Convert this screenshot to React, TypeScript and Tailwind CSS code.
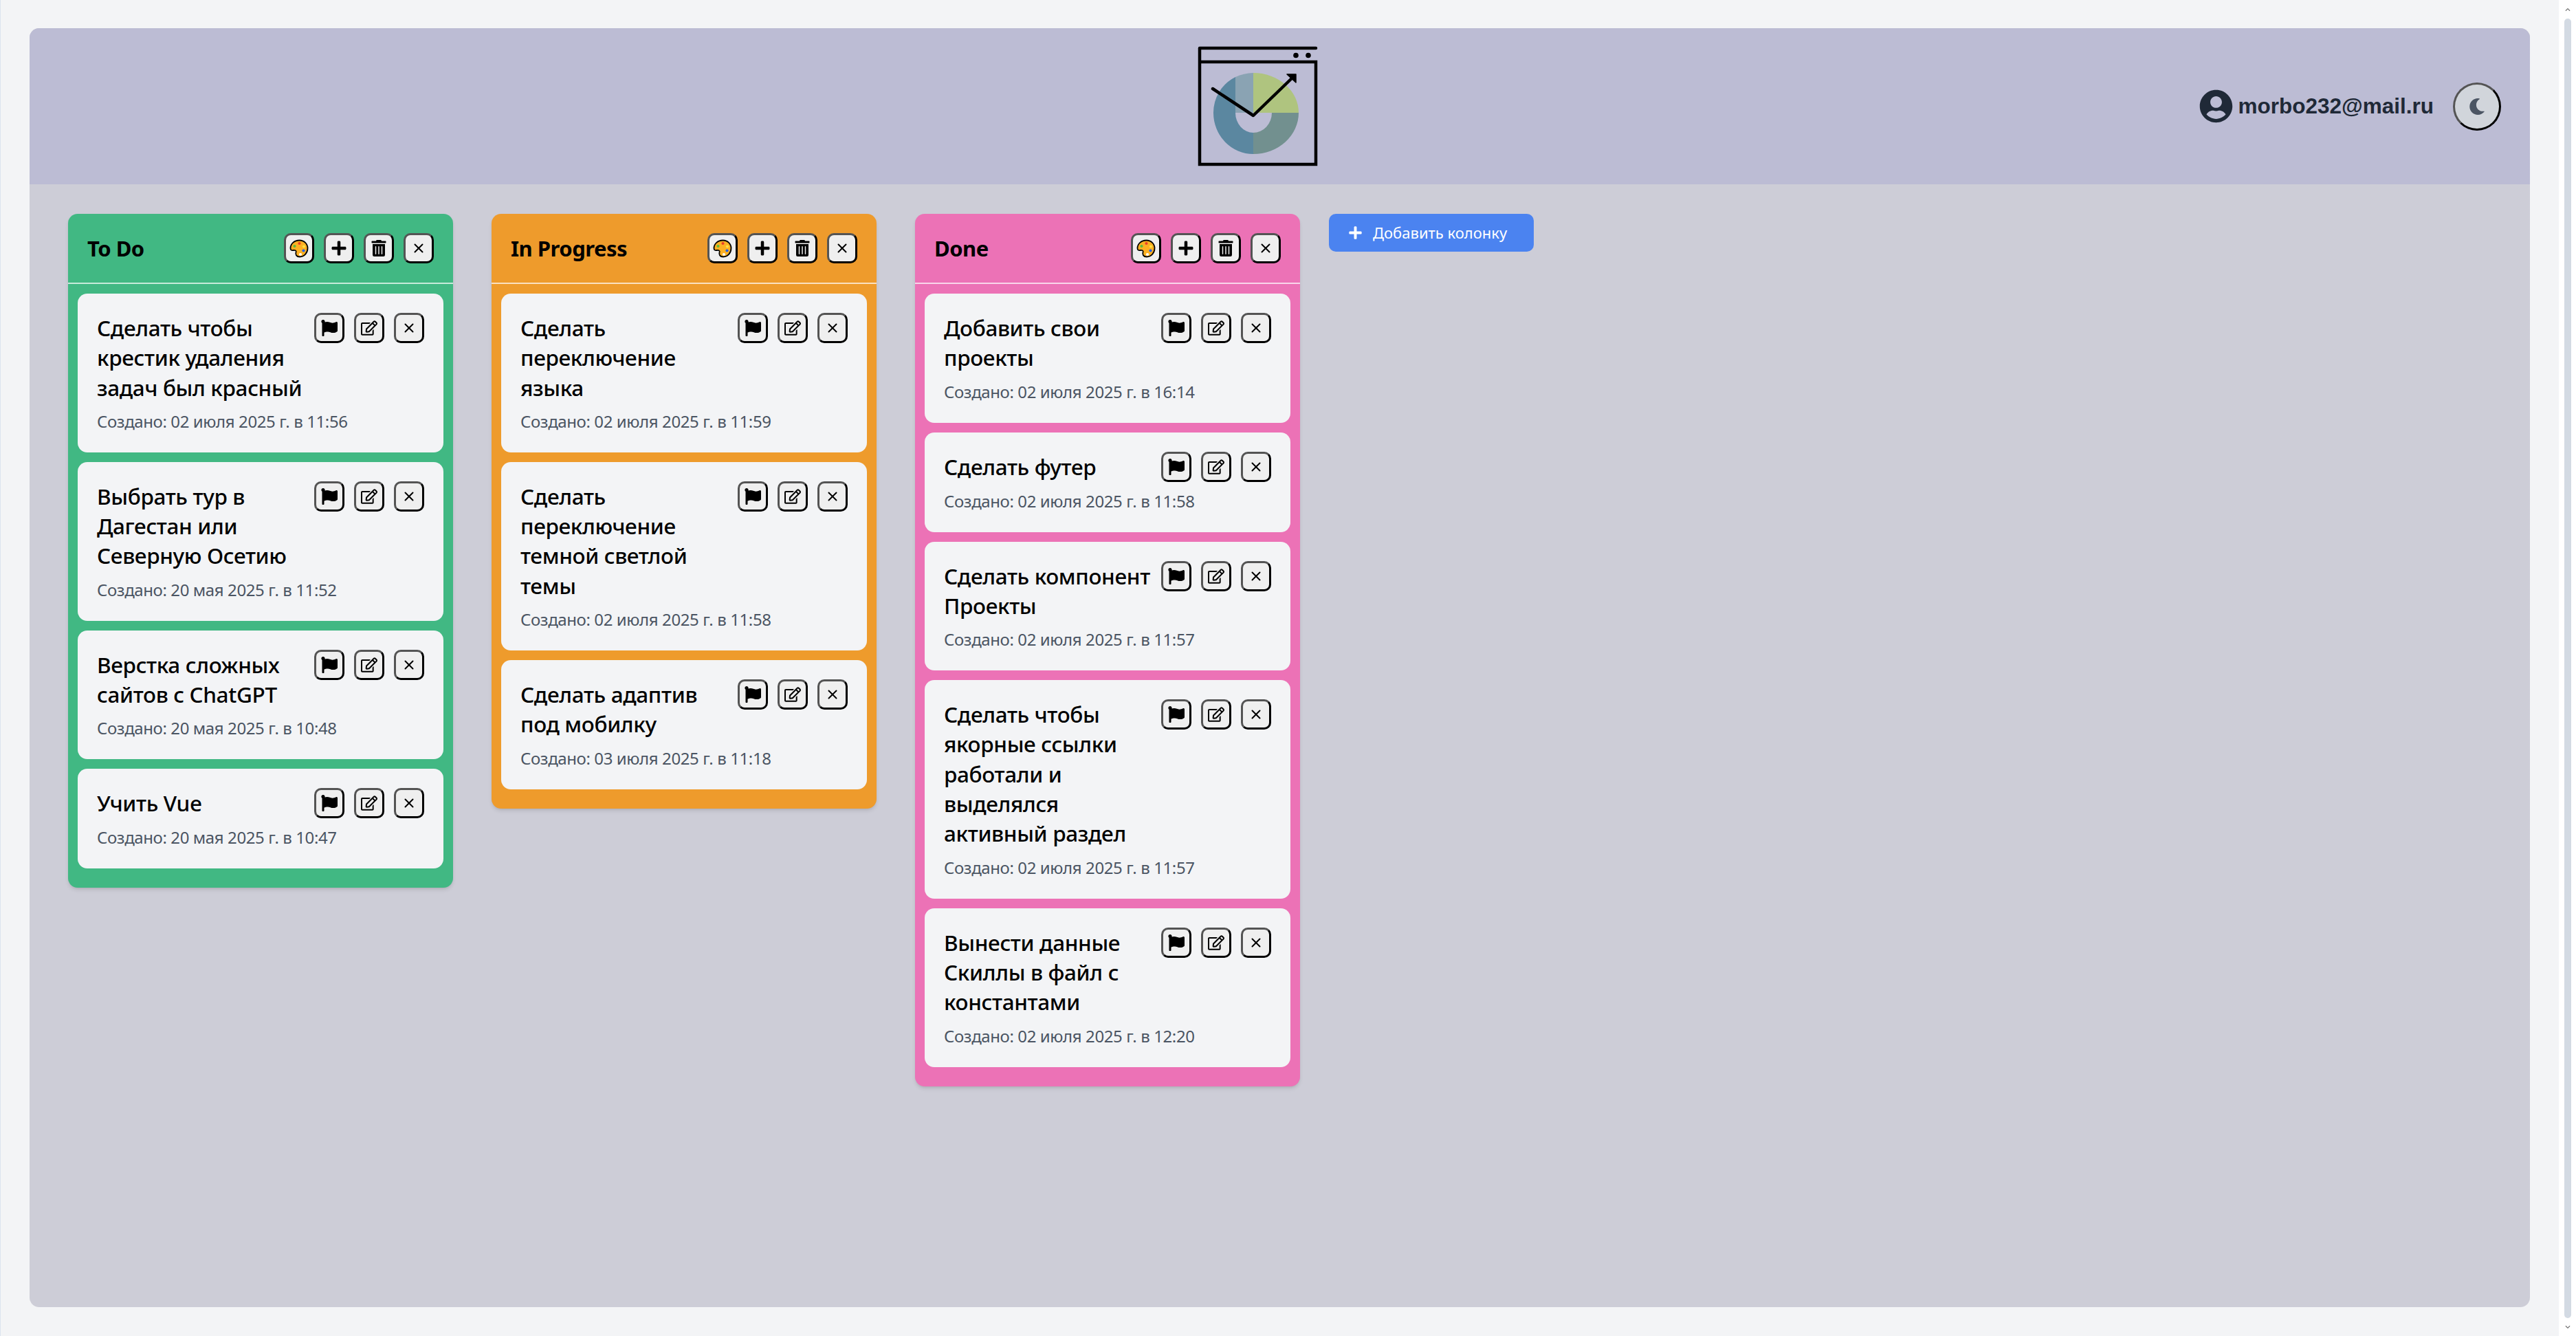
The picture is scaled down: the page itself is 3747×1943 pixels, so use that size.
import { FaChevronDown, FaChevronUp, FaFlag, FaMoon, FaPlus, FaRegEdit, FaTrashAlt, FaUserCircle } from "react-icons/fa";
import { X } from "lucide-react";
import type { ReactNode } from "react";

const columns = [
  {
    title: "To Do",
    color: "bg-[#41b883]",
    tasks: [
      { text: "Сделать чтобы\nкрестик удаления\nзадач был красный", date: "02 июля 2025 г. в 11:56" },
      { text: "Выбрать тур в\nДагестан или\nСеверную Осетию", date: "20 мая 2025 г. в 11:52" },
      { text: "Верстка сложных\nсайтов с ChatGPT", date: "20 мая 2025 г. в 10:48" },
      { text: "Учить Vue", date: "20 мая 2025 г. в 10:47" },
    ],
  },
  {
    title: "In Progress",
    color: "bg-[#ee9b2c]",
    tasks: [
      { text: "Сделать\nпереключение\nязыка", date: "02 июля 2025 г. в 11:59" },
      { text: "Сделать\nпереключение\nтемной светлой\nтемы", date: "02 июля 2025 г. в 11:58" },
      { text: "Сделать адаптив\nпод мобилку", date: "03 июля 2025 г. в 11:18" },
    ],
  },
  {
    title: "Done",
    color: "bg-[#ec72b6]",
    tasks: [
      { text: "Добавить свои\nпроекты", date: "02 июля 2025 г. в 16:14" },
      { text: "Сделать футер", date: "02 июля 2025 г. в 11:58" },
      { text: "Сделать компонент\nПроекты", date: "02 июля 2025 г. в 11:57" },
      { text: "Сделать чтобы\nякорные ссылки\nработали и\nвыделялся\nактивный раздел", date: "02 июля 2025 г. в 11:57" },
      { text: "Вынести данные\nСкиллы в файл с\nконстантами", date: "02 июля 2025 г. в 12:20" },
    ],
  },
];

function Logo() {
  return (
    <svg width="184" height="180" viewBox="0 0 184 180" fill="none" className="mr-[22px] shrink-0">
      <path d="M85 99 V41 A62 58 0 0 0 59 47 V99 Z" fill="#8aa3b3" />
      <path d="M85 99 V41 A66 58 0 0 1 151 99 Z" fill="#afc47f" />
      <path d="M151 99 A66 60 0 0 1 85 159 V128 A27 29 0 0 0 112 99 Z" fill="#72908f" />
      <path d="M85 159 A58 60 0 0 1 27 99 A58 58 0 0 1 59 47 V99 A26 29 0 0 0 85 128 Z" fill="#5b87a0" />
      <path d="M7 5 H176" stroke="#000" strokeWidth="4.5" strokeLinecap="round" />
      <path d="M7 5 V174 H176 V25 H7" stroke="#000" strokeWidth="4.5" />
      <circle cx="147" cy="15.5" r="3.8" fill="#000" />
      <circle cx="165" cy="15.5" r="3.8" fill="#000" />
      <path d="M26 64 L85 103 L144 46" stroke="#000" strokeWidth="4.5" strokeLinecap="round" strokeLinejoin="round" />
      <path d="M134 43 H147 V55 Z" fill="#000" stroke="#000" strokeWidth="1.5" strokeLinejoin="round" />
    </svg>
  );
}

function PaletteIcon() {
  return (
    <svg width="28" height="27" viewBox="0 0 28 27">
      <path
        d="M14.5 1.5 C7 1.5 1.5 6.5 1.5 13 C1.5 15.5 3 16.5 5.5 16 C8.5 15.5 10.5 16.5 9.5 19 C8.5 22 10 25.5 15 25.5 C22 25.5 26.5 19.5 26.5 13 C26.5 6.5 21.5 1.5 14.5 1.5 Z"
        fill="#fdb022"
        stroke="#000"
        strokeWidth="1.8"
      />
      <circle cx="14.5" cy="6" r="2.1" fill="#e8402a" />
      <circle cx="7.5" cy="10" r="2.1" fill="#5dbb3f" />
      <circle cx="21" cy="10.5" r="2.1" fill="#fbe043" />
      <circle cx="20.5" cy="16.5" r="2.1" fill="#2563eb" />
      <circle cx="16" cy="22" r="2.1" fill="#ffffff" />
    </svg>
  );
}

function IconButton({ children }: { children: ReactNode }) {
  return (
    <button className="flex h-[44px] w-[44px] shrink-0 items-center justify-center rounded-[10px] border-[3.5px] border-black bg-[#efefef] text-black [border-style:outset]">
      {children}
    </button>
  );
}

function TaskCard({ text, date }: { text: string; date: string }) {
  return (
    <div className="rounded-[14px] bg-[#f3f4f6] p-[28px]">
      <div className="flex items-start justify-between">
        <h3 className="whitespace-pre-line text-[31.5px] leading-[43.3px] font-medium tracking-[-0.35px] text-black">{text}</h3>
        <div className="flex shrink-0 gap-[14px]">
          <IconButton>
            <FaFlag size={24} />
          </IconButton>
          <IconButton>
            <FaRegEdit size={24} />
          </IconButton>
          <IconButton>
            <X size={22} strokeWidth={2.2} />
          </IconButton>
        </div>
      </div>
      <p className="mt-[10px] text-[24px] leading-[35px] tracking-[-0.4px] text-[#4b5563]">Создано: {date}</p>
    </div>
  );
}

function Column({ title, color, tasks }: (typeof columns)[number]) {
  return (
    <section className={`w-[560px] shrink-0 rounded-[14px] pb-[28px] shadow-md ${color}`}>
      <header className="flex h-[102px] items-center justify-between border-b-2 border-white/70 px-[28px]">
        <h2 className="text-[31px] font-bold tracking-[-0.5px] text-black">{title}</h2>
        <div className="flex gap-[14px]">
          <IconButton>
            <PaletteIcon />
          </IconButton>
          <IconButton>
            <FaPlus size={24} />
          </IconButton>
          <IconButton>
            <FaTrashAlt size={24} />
          </IconButton>
          <IconButton>
            <X size={22} strokeWidth={2.2} />
          </IconButton>
        </div>
      </header>
      <div className="mt-[14px] flex flex-col gap-[14px] px-[14px]">
        {tasks.map((task) => (
          <TaskCard key={task.text} text={task.text} date={task.date} />
        ))}
      </div>
    </section>
  );
}

export default function App() {
  return (
    <div className="flex h-[1943px] overflow-hidden bg-white font-['Noto_Sans',sans-serif]">
      <div className="flex flex-1 flex-col border-l border-[#dbe4ee] bg-[#f3f4f6] px-[42px] pt-[41px] pb-[42px]">
        <div className="flex flex-1 flex-col overflow-hidden rounded-[14px] bg-[#cdcdd7]">
          <div className="flex h-[227px] shrink-0 items-center bg-[#bcbcd4]">
            <div className="flex-1" />
            <Logo />
            <div className="flex flex-1 items-center justify-end pr-[42px]">
              <FaUserCircle size={49} className="text-[#1f2937]" />
              <span className="ml-[7px] font-['Liberation_Sans',sans-serif] text-[31.5px] font-bold text-[#1f2937]">morbo232@mail.ru</span>
              <button className="ml-[28px] flex h-[70px] w-[70px] items-center justify-center rounded-full border-[3.5px] border-black bg-[#d1d5db] text-[#4b5563] [border-style:outset]">
                <FaMoon size={24} />
              </button>
            </div>
          </div>
          <div className="flex flex-1 items-start gap-[56px] pt-[43px] pl-[56px]">
            {columns.map((column) => (
              <Column key={column.title} {...column} />
            ))}
            <button className="-ml-[14px] flex h-[55px] items-center gap-[15px] rounded-[10px] bg-[#4b83f0] pr-[39px] pl-[28px] text-[22px] text-white">
              <FaPlus size={21} />
              Добавить колонку
            </button>
          </div>
        </div>
      </div>
      <div className="flex w-[25px] shrink-0 flex-col items-center bg-white text-[#7a7a7a]">
        <div className="flex h-[27px] items-center">
          <FaChevronUp size={8} />
        </div>
        <div className="w-[10px] flex-1 rounded-full bg-[#d3dae3]" />
        <div className="flex h-[26px] items-center">
          <FaChevronDown size={8} />
        </div>
      </div>
    </div>
  );
}
